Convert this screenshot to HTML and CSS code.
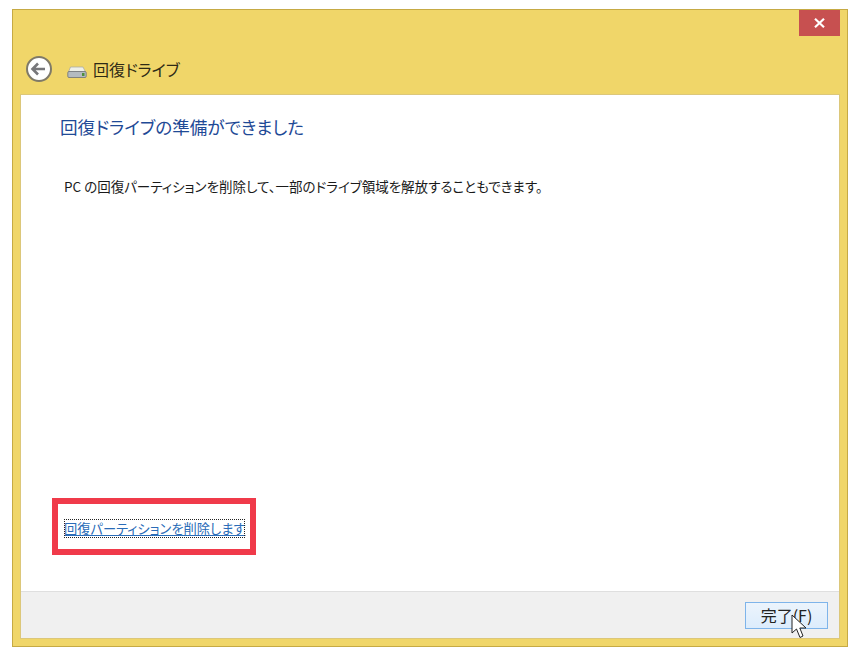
FILE: index.html
```html
<!DOCTYPE html>
<html lang="ja">
<head>
<meta charset="utf-8">
<title>回復ドライブ</title>
<link rel="stylesheet" href="styles.css">
</head>
<body>
<div class="window">
  <div class="titlebar">
    <button class="close" aria-label="閉じる">
      <svg width="11" height="10" viewBox="0 0 11 10"><path d="M1 0.8 L10 9.2 M10 0.8 L1 9.2" stroke="#fff" stroke-width="2.2" fill="none"/></svg>
    </button>
  </div>
  <div class="navbar">
    <svg class="back" width="28" height="28" viewBox="0 0 28 28">
      <circle cx="14" cy="14" r="12" fill="#fff" stroke="#7f7a68" stroke-width="2"/>
      <path d="M7.5 14 H20 M13 8.5 L7.5 14 L13 19.5" fill="none" stroke="#77777a" stroke-width="2.6"/>
    </svg>
    <svg class="drive" width="20" height="12" viewBox="0 0 20 12">
      <path d="M3.5 1 H16 L18.5 6 H1.5 Z" fill="#eef0e8" stroke="#a9aca6" stroke-width="0.8"/>
      <rect x="0.8" y="5.5" width="18.4" height="6" rx="1.2" fill="#b4bbc0" stroke="#6d7175" stroke-width="0.8"/>
      <rect x="15" y="7" width="2.5" height="3" fill="#4f8f3c"/>
    </svg>
    <span class="nav-title">回復ドライブ</span>
  </div>
  <div class="panel">
    <div class="content">
      <h1 class="heading">回復ドライブの準備ができました</h1>
      <p class="message">PC の回復パーティションを削除して、一部のドライブ領域を解放することもできます。</p>
      <div class="highlight">
        <a class="link" href="#">回復パーティションを削除します</a>
      </div>
    </div>
    <div class="footer">
      <button class="finish">完了(F)</button>
    </div>
  </div>
  <svg class="cursor" width="18" height="26" viewBox="0 0 18 26">
    <path d="M1 1 V19 L5.5 15 L9 23.5 L12 22 L8.8 14 H15 Z" fill="#fff" stroke="#222" stroke-width="1"/>
  </svg>
</div>
</body>
</html>
```
FILE: styles.css
```css
* { box-sizing: border-box; }
html, body { margin: 0; height: 100%; }
body {
  background: #fff;
  padding: 9px 19px 8px 12px;
  font-family: "Noto Sans CJK JP", "Liberation Sans", sans-serif;
  font-feature-settings: "palt";
}
.window {
  position: relative;
  width: 836px;
  height: 638px;
  display: flex;
  flex-direction: column;
  background: #f0d669;
  border: 1px solid #c6aa44;
  padding: 0 7px 7px 7px;
}
.titlebar {
  height: 27px;
  display: flex;
  justify-content: flex-end;
}
.close {
  width: 41px;
  height: 26px;
  padding: 0;
  border: 0;
  background: #c75050;
  display: flex;
  align-items: center;
  justify-content: center;
}
.navbar {
  height: 57px;
  display: flex;
  align-items: center;
  padding: 6px 0 0 5px;
}
.back { flex: none; }
.drive { margin: 6px 6px 0 14px; flex: none; }
.nav-title {
  font-size: 16px;
  color: #2e2a16;
  margin-top: 1px;
}
.panel {
  flex: 1;
  min-height: 0;
  display: flex;
  flex-direction: column;
  background: #fff;
  border: 1px solid #dcc77a;
}
.content {
  flex: 1;
  display: flex;
  flex-direction: column;
  padding: 19px 0 36px 31px;
}
.heading {
  margin: 0 0 0 8px;
  font-size: 17.6px;
  font-weight: 400;
  line-height: 26px;
  color: #1f4a96;
}
.message {
  margin: 37px 0 0 12px;
  font-size: 13.5px;
  line-height: 18px;
  color: #1a1a1a;
}
.highlight {
  margin-top: auto;
  align-self: flex-start;
  width: 204px;
  height: 57px;
  border: 6px solid #f03a4a;
  padding: 15px 0 0 6px;
}
.link {
  display: block;
  width: 181px;
  height: 19px;
  font-size: 13.25px;
  line-height: 19px;
  color: #2a6cb8;
  text-decoration: underline;
  white-space: nowrap;
  outline: 1px dotted #222;
  outline-offset: -1px;
}
.footer {
  height: 47px;
  flex: none;
  display: flex;
  align-items: center;
  justify-content: flex-end;
  padding: 0 11px 0 0;
  background: #f0f0f0;
  border-top: 1px solid #dfdfdf;
}
.finish {
  width: 83px;
  height: 27px;
  padding: 0;
  font: inherit;
  font-size: 16px;
  line-height: 1;
  color: #222;
  background: linear-gradient(#ecf4fc, #dcecfc);
  border: 1px solid #7eb4ea;
}
.cursor {
  position: absolute;
  left: 778px;
  top: 604px;
}
```
